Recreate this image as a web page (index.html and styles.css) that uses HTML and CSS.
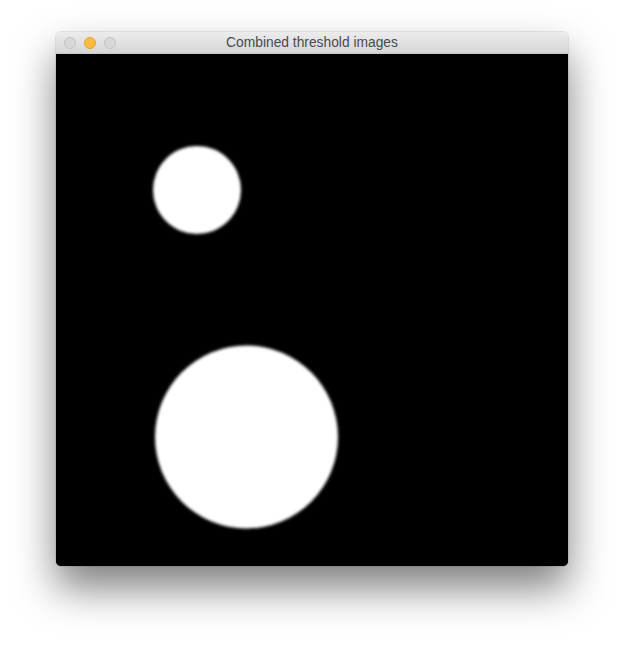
FILE: index.html
```html
<!DOCTYPE html>
<html>
<head>
<meta charset="utf-8">
<link rel="stylesheet" href="styles.css">
</head>
<body>
<div class="window">
  <div class="titlebar">
    <div class="lights">
      <span class="light off"></span>
      <span class="light min"></span>
      <span class="light off"></span>
    </div>
    <div class="title">Combined threshold images</div>
  </div>
  <div class="content">
    <svg width="512" height="512" viewBox="0 0 512 512">
      <defs>
        <filter id="blur" x="-10%" y="-10%" width="120%" height="120%">
          <feGaussianBlur stdDeviation="1.6"/>
        </filter>
      </defs>
      <rect width="512" height="512" fill="#000"/>
      <circle cx="141" cy="136" r="44" fill="#fff" filter="url(#blur)"/>
      <circle cx="190.5" cy="383" r="91.5" fill="#fff" filter="url(#blur)"/>
    </svg>
  </div>
</div>
</body>
</html>
```
FILE: styles.css
```css
html, body {
  margin: 0;
  padding: 0;
  background: #fff;
}
body {
  width: 624px;
  height: 646px;
  overflow: hidden;
  padding-top: 32px;
  padding-left: 56px;
  box-sizing: border-box;
}
.window {
  width: 512px;
  border-radius: 5px;
  overflow: hidden;
  box-shadow: 0 22px 40px rgba(0,0,0,0.5), 0 0 0 1px rgba(0,0,0,0.08);
}
.titlebar {
  height: 21px;
  background: linear-gradient(#ececec, #d6d6d6);
  border-bottom: 1px solid #c8c8c8;
  display: flex;
  align-items: center;
  position: relative;
}
.lights {
  display: flex;
  gap: 8px;
  padding-left: 8px;
}
.light {
  width: 12px;
  height: 12px;
  border-radius: 50%;
  box-sizing: border-box;
}
.light.off {
  background: #d8d8d8;
  border: 1px solid #c2c2c2;
}
.light.min {
  background: #fdbc40;
  border: 1px solid #e1a32f;
}
.title {
  position: absolute;
  left: 0;
  right: 0;
  top: 0;
  line-height: 22px;
  text-align: center;
  font-family: "Liberation Sans", Arial, sans-serif;
  font-size: 13.8px;
  color: #4a4a4a;
  pointer-events: none;
}
.content {
  height: 512px;
  background: #000;
  display: block;
}
.content svg {
  display: block;
}
```
